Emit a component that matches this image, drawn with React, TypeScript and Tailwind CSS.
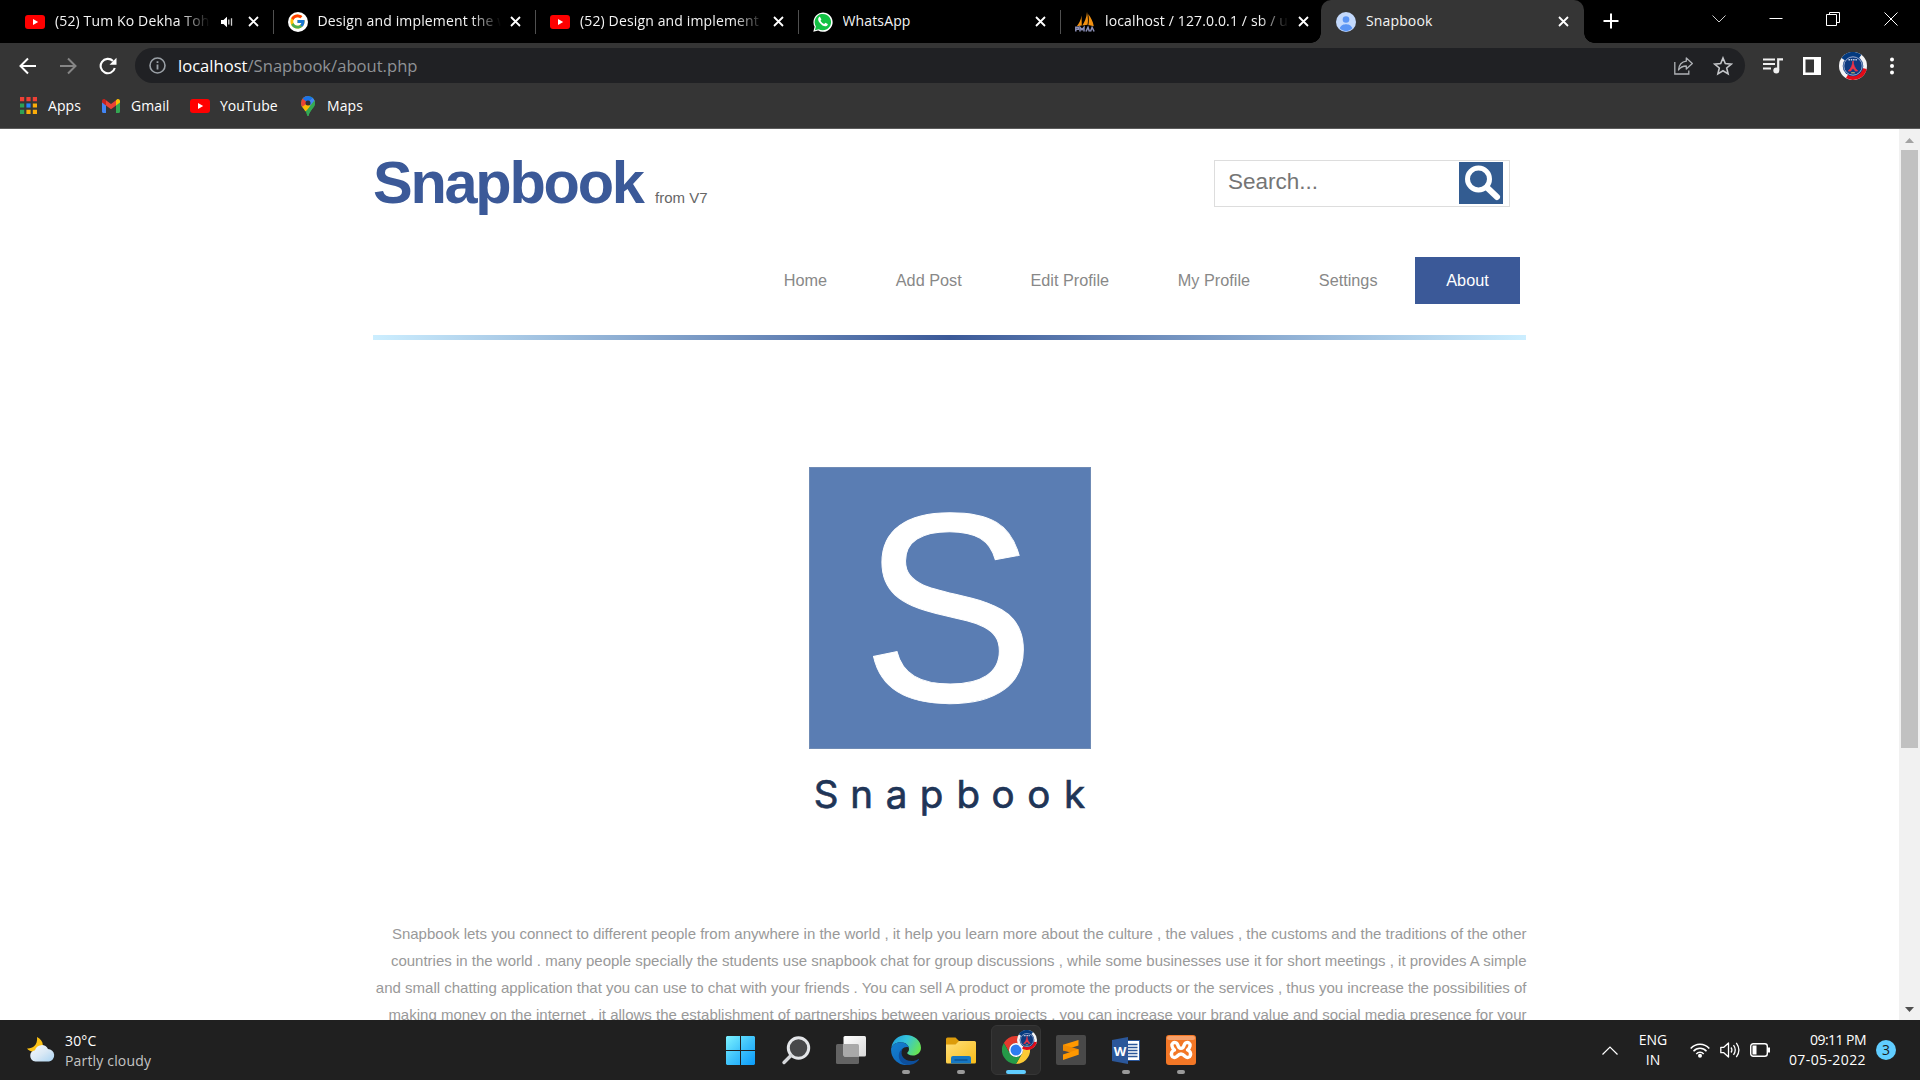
import type { ReactNode } from "react";
import { FcGoogle } from "react-icons/fc";

/* ---------- small icons ---------- */

function YouTubeIcon() {
  return (
    <svg viewBox="0 0 20 14" className="h-[14px] w-5 shrink-0">
      <rect width="20" height="14" rx="3" fill="#ff0000" />
      <path d="M8 4l5.2 3L8 10z" fill="#fff" />
    </svg>
  );
}

function GoogleIcon() {
  return (
    <span className="flex size-5 shrink-0 items-center justify-center rounded-full bg-white">
      <FcGoogle className="size-[17px]" />
    </span>
  );
}

function WhatsAppIcon() {
  return (
    <svg viewBox="0 0 20 20" className="size-5 shrink-0">
      <path d="M.3 19.8l1.3-5A9.6 9.6 0 1 1 5.2 18.500z" fill="#fff" />
      <path d="M1.900 18.200l1-3.700A8.200 8.200 0 1 1 5.700 17.200z" fill="#12c143" />
      <path
        d="M7.200 5.300c-.3-.6-.9-.6-1.300-.1-1.400 1.500-.8 3.600 1 5.800 2.100 2.500 4.700 4 6.700 3 1.100-.6 1.300-1.500 1.100-2.100l-2.300-1.200-1.200 1.300c-1.500-.5-2.900-1.700-3.700-3.300l.9-1.200z"
        fill="#fff"
      />
    </svg>
  );
}

function PhpMyAdminIcon() {
  return (
    <svg viewBox="0 0 20 20" className="size-5 shrink-0">
      <path d="M6.500 3.500C6 8 4 11.500 1.800 14.200l5-.8zM12 0C11.500 6 9.500 10 7.300 13.400l5.200-.6c.8-4 .5-8-.5-12.800zM13.200 2c.8 4 .8 7.500.2 10.900l5.400 1.300C18 9.500 16 5.500 13.200 2z" fill="#f29111" />
      <path d="M.8 19.500v-4.200h2.500v2H1M5 19.500v-4.200l2 2.500 2-2.500v4.200M11 19.500l2-4.200 1.400 4.200M15.500 19.500l1.600-4.200 2 4.200" stroke="#8c90b8" strokeWidth="1.500" fill="none" />
    </svg>
  );
}

function PersonIcon() {
  return (
    <svg viewBox="0 0 20 20" className="size-5 shrink-0">
      <circle cx="10" cy="10" r="10" fill="#c3d9fc" />
      <circle cx="10" cy="7.500" r="3.300" fill="#5a95f5" />
      <path d="M3.600 16.300C5 12.800 8 12.200 10 12.200s5 .6 6.400 4.100A9.900 9.900 0 0 1 10 19.500a9.900 9.900 0 0 1-6.400-3.200z" fill="#5a95f5" />
    </svg>
  );
}

function SpeakerIcon() {
  return (
    <svg viewBox="0 0 12 12" className="mr-[15px] ml-[11px] size-3 shrink-0">
      <path d="M0 4h2.500L6 .8v10.400L2.500 8H0z" fill="#fff" />
      <path d="M7.800 3.500v5M10.500 2.300v7.400" stroke="#d0d0d0" strokeWidth="1.300" />
    </svg>
  );
}

function TabCloseIcon() {
  return (
    <svg viewBox="0 0 11 11" className="size-[11px] shrink-0">
      <path d="M1 1l9 9M10 1l-9 9" stroke="#fff" strokeWidth="1.800" />
    </svg>
  );
}

function ClubBadge({ className }: { className: string }) {
  return (
    <svg viewBox="0 0 28 28" className={className}>
      <circle cx="14" cy="14" r="14" fill="#f4f4f6" />
      <path d="M2.500 6A14 14 0 0 1 22.500 2.800L14 14z" fill="#043a7e" />
      <path d="M27.800 17A14 14 0 0 1 7 26l7-12z" fill="#e30a17" />
      <circle cx="14" cy="14" r="10.300" fill="#0d3a80" />
      <circle cx="14" cy="14" r="9.200" fill="none" stroke="#a9b9d8" strokeWidth=".9" />
      <path d="M9.500 7.800h9" stroke="#c9d3e6" strokeWidth="1.600" strokeDasharray="1.500 .8" />
      <path d="M14 9c.4 4 1.600 7 4.600 10h-2.400c-.6-1.600-1.200-2.200-2.200-2.200s-1.600.6-2.200 2.200H9.400c3-3 4.200-6 4.600-10z" fill="#ee3347" stroke="#ee3347" strokeWidth=".8" />
      <path d="M12.200 20.800h3.600" stroke="#e8c65b" strokeWidth="1" />
    </svg>
  );
}

/* ---------- browser chrome ---------- */

type TabData = { icon: ReactNode; title: string; sound?: boolean; fade?: boolean; divider?: boolean };

const tabs: TabData[] = [
  { icon: <YouTubeIcon />, title: "(52) Tum Ko Dekha Toh", sound: true, fade: true, divider: true },
  { icon: <GoogleIcon />, title: "Design and implement the w", fade: true, divider: true },
  { icon: <YouTubeIcon />, title: "(52) Design and implement", fade: true, divider: true },
  { icon: <WhatsAppIcon />, title: "WhatsApp", divider: true },
  { icon: <PhpMyAdminIcon />, title: "localhost / 127.0.0.1 / sb / u", fade: true },
];

const fadeClass = "[mask-image:linear-gradient(to_right,#000_calc(100%-30px),transparent)]";

function Tab({ icon, title, sound, fade, divider }: TabData) {
  return (
    <div className="flex w-[262.5px] shrink-0 items-center pl-[14px]">
      {icon}
      <span className={`ml-[10px] flex-1 overflow-hidden pb-[2px] tracking-[0.14px] whitespace-nowrap ${fade ? fadeClass : ""}`}>{title}</span>
      {sound ? <SpeakerIcon /> : <span className="w-[9px]" />}
      <TabCloseIcon />
      <span className={`ml-[14px] h-6 w-px ${divider ? "bg-[#505050]" : ""}`} />
    </div>
  );
}

function TabStrip() {
  return (
    <div className="flex h-[43px] bg-black pl-[11px] text-[14px] leading-5 text-[#f4f4f4]">
      {tabs.map((t) => (
        <Tab key={t.title} {...t} />
      ))}
      <div className="relative -ml-[2.500px] flex w-[263px] shrink-0 items-center rounded-t-[10px] bg-[#353535] pl-[15px]">
        <span className="absolute bottom-0 -left-[10px] size-[10px] bg-[radial-gradient(circle_at_0_0,#000_9.5px,#353535_10px)]" />
        <span className="absolute -right-[10px] bottom-0 size-[10px] bg-[radial-gradient(circle_at_100%_0,#000_9.5px,#353535_10px)]" />
        <PersonIcon />
        <span className="ml-[10px] flex-1 pb-[2px] tracking-[0.14px]">Snapbook</span>
        <TabCloseIcon />
        <span className="w-[15px]" />
      </div>
      <svg viewBox="0 0 16 16" className="mt-[13px] ml-[19px] size-4">
        <path d="M8 .5v15M.5 8h15" stroke="#fff" strokeWidth="2" />
      </svg>
      <div className="mt-[12px] mr-[22px] ml-auto flex h-[14px]">
        <svg viewBox="0 0 14 14" className="mr-[43px] size-[14px]">
          <path d="M.5 3.500L7 10l6.500-6.500" stroke="#ccc" fill="none" />
        </svg>
        <svg viewBox="0 0 14 14" className="mr-[43px] size-[14px]">
          <path d="M.5 6.500h13" stroke="#fff" />
        </svg>
        <svg viewBox="0 0 14 14" className="mr-[44px] size-[14px]">
          <path d="M.5 2.500h10v11H.5zM3.500 2.500v-2h10v10h-3" stroke="#fff" fill="none" />
        </svg>
        <svg viewBox="0 0 14 14" className="size-[14px]">
          <path d="M.5.5l13 13M13.500.5l-13 13" stroke="#fff" />
        </svg>
      </div>
    </div>
  );
}

function Toolbar() {
  return (
    <div className="flex h-[45px] items-center pl-[19px]">
      <svg viewBox="0 0 18 18" className="size-[18px]">
        <path d="M17 9H2M9 1.500L1.500 9 9 16.500" stroke="#fff" strokeWidth="2" fill="none" />
      </svg>
      <svg viewBox="0 0 18 18" className="ml-[22px] size-[18px]">
        <path d="M1 9h15M9 1.500L16.500 9 9 16.500" stroke="#868686" strokeWidth="2" fill="none" />
      </svg>
      <svg viewBox="0 0 18 18" className="ml-[22px] size-[18px]">
        <path d="M15.800 11A7.200 7.200 0 1 1 14 4" stroke="#fff" strokeWidth="2.100" fill="none" />
        <path d="M17.500.8v7h-7z" fill="#fff" />
      </svg>
      <div className="ml-[18px] flex h-[35px] w-[1610px] items-center rounded-full bg-[#202124] pl-[14px]">
        <svg viewBox="0 0 17 17" className="size-[17px]">
          <circle cx="8.500" cy="8.500" r="7.500" stroke="#9aa0a6" strokeWidth="1.600" fill="none" />
          <path d="M8.500 7.500v5M8.500 4.300v1.800" stroke="#9aa0a6" strokeWidth="1.800" />
        </svg>
        <span className="ml-[12px] text-[16.600px] leading-6 text-[#8f9296]">
          <span className="text-white">localhost</span>/Snapbook/about.php
        </span>
        <svg viewBox="0 0 19 18" className="mr-[20px] ml-auto h-[18px] w-[19px]">
          <path d="M.8 5v12h14v-3.500" stroke="#b0b3b7" strokeWidth="1.300" fill="none" />
          <path d="M12.300 1l6 5.500-6 5.500V9C9 9 6.500 10 4.500 13c.5-5 3.500-8.300 7.800-8.800z" stroke="#b0b3b7" strokeWidth="1.300" strokeLinejoin="round" fill="none" />
        </svg>
        <svg viewBox="0 0 20 20" className="mr-[12px] size-[20px]">
          <path d="M10 2l2.300 5.600 6 .5-4.600 3.900 1.400 5.900-5.100-3.100-5.100 3.100L6.300 12 1.700 8.100l6-.5z" stroke="#c4c6c9" strokeWidth="1.600" fill="none" />
        </svg>
      </div>
      <svg viewBox="0 0 20 16" className="ml-[18px] h-4 w-5">
        <path d="M0 1.500h12M0 6h12M0 10.500h8" stroke="#f0f0f0" strokeWidth="2" />
        <path d="M15.200 12V1.300H20" stroke="#f0f0f0" strokeWidth="2.200" fill="none" />
        <circle cx="13.300" cy="12.600" r="3" fill="#f0f0f0" />
      </svg>
      <svg viewBox="0 0 18 18" className="ml-[20px] size-[18px]">
        <path d="M0 0h18v18H0zM2.500 2.500v13h8.500v-13z" fill="#fff" fillRule="evenodd" />
      </svg>
      <ClubBadge className="ml-[18px] size-7" />
      <svg viewBox="0 0 4 18" className="ml-[23px] h-[18px] w-1">
        <circle cx="2" cy="2.500" r="2" fill="#fff" />
        <circle cx="2" cy="9" r="2" fill="#fff" />
        <circle cx="2" cy="15.500" r="2" fill="#fff" />
      </svg>
    </div>
  );
}

function BookmarksBar() {
  return (
    <div className="flex h-[40px] items-center pb-[5px] pl-5 text-[14px] leading-5 tracking-[0.08px] text-white">
      <svg viewBox="0 0 17 17" className="size-[17px]">
        <path d="M0 0h4.200v4.200H0zM6.400 0h4.200v4.200H6.400zM12.800 0H17v4.200h-4.200z" fill="#ee4035" />
        <path d="M0 6.400h4.200v4.200H0zM0 12.800h4.200V17H0z" fill="#2ea155" />
        <path d="M6.400 6.400h4.200v4.200H6.400z" fill="#2684fc" />
        <path d="M12.800 6.400H17v4.200h-4.200zM6.400 12.800h4.200V17H6.400zM12.800 12.800H17V17h-4.200z" fill="#fbac09" />
      </svg>
      <span className="ml-[11px] w-[54px]">Apps</span>
      <svg viewBox="0 0 18 14" className="h-[14px] w-[18px]">
        <path d="M0 2v10.800c0 .7.500 1.200 1.200 1.200H4V6z" fill="#4285f4" />
        <path d="M18 2v10.800c0 .7-.5 1.200-1.200 1.200H14V6z" fill="#34a853" />
        <path d="M14 1.200V6.500l4-3V2c0-1.800-2-2.500-3.200-1.500z" fill="#fbbc04" />
        <path d="M0 2v1.500l4 3V1.200L3.200.5C2-.5 0 .2 0 2z" fill="#c5221f" />
        <path d="M4 1.200L9 5l5-3.800v5.300l-5 3.800-5-3.800z" fill="#ea4335" />
      </svg>
      <span className="ml-[11px] w-[59px]">Gmail</span>
      <YouTubeIcon />
      <span className="ml-[10px] w-[81px] tracking-normal">YouTube</span>
      <svg viewBox="0 0 14 20" className="h-5 w-[14px]">
        <defs>
          <clipPath id="pin">
            <path d="M7 0a7 7 0 0 0-7 7c0 5 5 6.500 6.200 12.300.3.900 1.300.9 1.600 0C9 13.500 14 12 14 7a7 7 0 0 0-7-7z" />
          </clipPath>
        </defs>
        <g clipPath="url(#pin)">
          <path d="M0 0h14v20H0z" fill="#34a853" />
          <path d="M0 16V10l9-9 5 4-9 10z" fill="#fbbc04" />
          <path d="M0 11.500L7 7V0H0z" fill="#ea4335" />
          <path d="M1.500 2.500L7 7l6-5.500L8 0H3z" fill="#1a73e8" />
          <path d="M7 7l5-5.500L14 5 9 10z" fill="#4285f4" />
          <path d="M14 4v16H4l5-10 4-5z" fill="#34a853" />
        </g>
        <circle cx="7" cy="7" r="2.500" fill="#303134" />
      </svg>
      <span className="ml-[12px]">Maps</span>
    </div>
  );
}

/* ---------- web page ---------- */

const navItems = ["Home", "Add Post", "Edit Profile", "My Profile", "Settings", "About"];

const paragraphLines = [
  "Snapbook lets you connect to different people from anywhere in the world , it help you learn more about the culture , the values , the customs and the traditions of the other",
  "countries in the world . many people specially the students use snapbook chat for group discussions , while some businesses use it for short meetings , it provides A simple",
  "and small chatting application that you can use to chat with your friends . You can sell A product or promote the products or the services , thus you increase the possibilities of",
  "making money on the internet , it allows the establishment of partnerships between various projects , you can increase your brand value and social media presence for your",
];

function SnapbookLogo() {
  return (
    <svg viewBox="0 0 282 350" className="mt-[127px] ml-[436px] h-[350px] w-[282px] overflow-visible">
      <rect x=".5" y=".5" width="281" height="281" fill="#5a7db3" stroke="#6f8bb5" />
      <text
        transform="translate(139.500 234) scale(.975 1.01)"
        textAnchor="middle"
        fontSize="267"
        fill="#fff"
        stroke="#fff"
        strokeWidth="1"
        className="font-['Liberation_Sans',Arial,sans-serif]"
      >
        S
      </text>
      <text
        x="4.800 41.300 76.800 110.800 147.500 182.500 218.200 255"
        y="341"
        fontSize="38.500"
        fill="#1f3557"
        stroke="#1f3557"
        strokeWidth=".7"
        className="font-['Inter',sans-serif] font-normal"
      >
        Snapbook
      </text>
    </svg>
  );
}

function WebPage() {
  return (
    <main className="flex h-[891px] overflow-hidden bg-white font-['Liberation_Sans',Arial,sans-serif]">
      <div className="flex-1">
        <div className="ml-[373px] w-[1153px]">
          <div className="flex h-[128px] items-start justify-between pr-4">
            <div className="flex items-baseline pt-[24px]">
              <h1 className="text-[59.500px] leading-[60px] font-bold tracking-[-2.250px] text-[#3b5998]">Snapbook</h1>
              <span className="ml-[12.500px] text-[15px] leading-5 text-[#666]">from V7</span>
            </div>
            <div className="mt-[31px] flex h-[47px] w-[296px] items-start justify-between border border-[#ddd] pt-px pr-[6px] pl-[13px]">
              <span className="pt-[6px] text-[22.500px] leading-7 text-[#757575]">Search...</span>
              <svg viewBox="0 0 44 42" className="h-[42px] w-11 bg-[#335c91]">
                <circle cx="19.500" cy="17" r="11" stroke="#fff" strokeWidth="5" fill="none" />
                <path d="M28 25.500L38 35" stroke="#fff" strokeWidth="6" strokeLinecap="round" />
              </svg>
            </div>
          </div>
          <nav className="flex justify-end gap-[6.250px] pr-[6px] text-[16.250px] leading-[47px]">
            {navItems.map((item) => (
              <a
                key={item}
                className={`px-[31.250px] whitespace-nowrap ${item === "About" ? "bg-[#3b5998] text-white" : "text-[#888]"}`}
              >
                {item}
              </a>
            ))}
          </nav>
          <div className="mt-[31px] h-[5px] bg-[linear-gradient(to_right,#cceeff,#3b5998,#cceeff)]" />
          <SnapbookLogo />
          <div className="mt-[103px] -mr-[0.500px] text-right text-[15px] leading-[27px] whitespace-nowrap text-[#999]">
            {paragraphLines.map((line) => (
              <p key={line}>{line}</p>
            ))}
          </div>
        </div>
      </div>
      <div className="flex w-[21px] flex-col items-center bg-[#f1f1f1]">
        <svg viewBox="0 0 21 21" className="size-[21px] shrink-0">
          <path d="M6 14h9l-4.500-5z" fill="#a3a3a3" />
        </svg>
        <div className="h-[598px] w-[17px] shrink-0 bg-[#c1c1c1]" />
        <svg viewBox="0 0 21 21" className="mt-auto size-[21px] shrink-0">
          <path d="M6 8h9l-4.500 5z" fill="#505050" />
        </svg>
      </div>
    </main>
  );
}

/* ---------- Windows taskbar ---------- */

function WeatherIcon() {
  return (
    <svg viewBox="0 0 28 25" className="h-[25px] w-7">
      <defs>
        <linearGradient id="cloud" x1="0" y1="0" x2="1" y2="1">
          <stop offset="0" stopColor="#f4f8fc" />
          <stop offset=".5" stopColor="#dbe9f5" />
          <stop offset="1" stopColor="#a9d3f2" />
        </linearGradient>
      </defs>
      <path d="M10 0c3.500 2 5.800 4.500 5.800 8S12 15 8 15C4 15 1 13 0 11.500c5 .5 11-3 10-11.500z" fill="#fbc115" />
      <path d="M8.500 24.500a5.700 5.700 0 0 1-.5-11.300 7 7 0 0 1 13-1.200 6.300 6.300 0 0 1 1 12.500z" fill="url(#cloud)" />
    </svg>
  );
}

function WindowsIcon() {
  return (
    <svg viewBox="0 0 29 29" className="size-[29px]">
      <defs>
        <linearGradient id="win" x1="0" y1="0" x2="1" y2="1">
          <stop offset="0" stopColor="#7df3ff" />
          <stop offset=".5" stopColor="#3fc3fb" />
          <stop offset="1" stopColor="#0a9bfa" />
        </linearGradient>
      </defs>
      <path d="M1 0h13v14H0V1zM15 0h13l1 1v13H15zM0 15h14v14H1l-1-1zM15 15h14v13l-1 1H15z" fill="url(#win)" />
    </svg>
  );
}

function SearchTaskIcon() {
  return (
    <svg viewBox="0 0 28 29" className="h-[29px] w-7 overflow-visible">
      <circle cx="16.500" cy="12" r="10.200" fill="#47484a" stroke="#e3e5e8" strokeWidth="3" />
      <path d="M9 19.500l-7 7" stroke="#d5d7da" strokeWidth="3.400" strokeLinecap="round" />
    </svg>
  );
}

function TaskViewIcon() {
  return (
    <svg viewBox="0 0 30 28" className="h-7 w-[30px]">
      <defs>
        <linearGradient id="tv" x1="0" y1="0" x2="1" y2="1">
          <stop offset="0" stopColor="#fff" />
          <stop offset="1" stopColor="#d8d8d8" />
        </linearGradient>
      </defs>
      <rect y="8" width="23" height="20" rx="1.500" fill="#636363" />
      <rect x="7.500" width="22.500" height="20.500" rx="1.500" fill="url(#tv)" />
      <path d="M7.500 8H21.500q1.500 0 1.500 1.500v11H9q-1.500 0-1.500-1.500z" fill="#a9a9a9" />
    </svg>
  );
}

function EdgeIcon() {
  return (
    <svg viewBox="0 0 30 30" className="size-[30px]">
      <defs>
        <linearGradient id="edgeTop" x1="0" y1=".2" x2="1" y2=".6">
          <stop offset="0" stopColor="#1f9fdc" />
          <stop offset=".45" stopColor="#35c4dc" />
          <stop offset="1" stopColor="#68e552" />
        </linearGradient>
        <linearGradient id="edgeBody" x1="0" y1="0" x2=".6" y2="1">
          <stop offset="0" stopColor="#1481cf" />
          <stop offset="1" stopColor="#0f68bd" />
        </linearGradient>
      </defs>
      <path d="M.4 12.500C1.500 5 7.500 0 15 0c8.500 0 15 5.800 15 12.700 0 4.800-3.800 7.800-8.200 7.800-3.600 0-5.600-1.300-5.600-2.400 0-.9 1.800-1.300 1.800-4C18 10 14.500 7.200 9.700 7.200 5 7.200 2 9.500.4 12.500z" fill="url(#edgeTop)" />
      <path d="M.2 13C2 9 5.500 7.200 9.700 7.200c4.300 0 7.300 2.300 8.100 5.200C13 11 9.500 14.500 9.500 18.500c0 5 3.800 9.500 10 10.800A15 15 0 0 1 .2 13z" fill="url(#edgeBody)" />
      <path d="M11.500 14c-3 6 1.500 12 9 12 2.800 0 5-.8 6.600-1.800.7-.4 1 .2.7.7C25 28.500 20.500 30 16.500 30 10.500 29.500 7.500 24.500 7.800 20c.2-2.800 1.700-4.900 3.700-6z" fill="#0d4f9c" />
    </svg>
  );
}

function FolderIcon() {
  return (
    <svg viewBox="0 0 30 27" className="h-[27px] w-[30px]">
      <defs>
        <linearGradient id="fold" x1="0" y1="0" x2="1" y2="1">
          <stop offset="0" stopColor="#ffdf7b" />
          <stop offset="1" stopColor="#f9bd18" />
        </linearGradient>
      </defs>
      <path d="M0 2q0-1.500 1.500-1.500h8L13 4v6H0z" fill="#dc9b0b" />
      <path d="M0 7.500h9.500L13 4h15.500Q30 4 30 5.500V25q0 1.500-1.500 1.500h-27Q0 26.500 0 25z" fill="url(#fold)" />
      <path d="M5 26.500V21q0-2 2-2h16q2 0 2 2v5.500z" fill="#1678c4" />
      <path d="M8.500 23h13" stroke="#0c4f8e" strokeWidth="1.300" />
    </svg>
  );
}

function ChromeIcon() {
  return (
    <span className="relative">
      <svg viewBox="0 0 24 24" className="size-7">
        <path d="M12 6H22.400A12 12 0 0 0 1.600 6L6.800 15A6 6 0 0 1 12 6z" fill="#e33b2e" />
        <path d="M22.400 6A12 12 0 0 1 12 24L17.200 15A6 6 0 0 0 12 6z" fill="#fcc934" />
        <path d="M12 24A12 12 0 0 1 1.600 6L6.800 15A6 6 0 0 0 17.200 15z" fill="#259b48" />
        <circle cx="12" cy="12" r="6" fill="#fff" />
        <circle cx="12" cy="12" r="4.700" fill="#2d7cf0" />
      </svg>
      <ClubBadge className="absolute -top-[6px] left-[15px] size-5" />
    </span>
  );
}

function SublimeIcon() {
  return (
    <svg viewBox="0 0 30 30" className="size-[30px]">
      <rect width="30" height="30" rx="2" fill="#494949" />
      <path d="M7 9.800L22.500 5v5.600L7 15.500z" fill="#ff9800" />
      <path d="M7 9.800v5.700l15.500 4.300V14.300z" fill="#f08a00" />
      <path d="M22.500 14.300v5.500L7 25v-5.500z" fill="#ff9800" />
    </svg>
  );
}

function WordIcon() {
  return (
    <svg viewBox="0 0 28 27" className="h-[27px] w-7">
      <rect x="14" y="3.500" width="13.500" height="20" fill="#fff" stroke="#2b579a" />
      <path d="M16 7.500h9.500M16 10.500h9.500M16 13.500h9.500M16 16.500h9.500M16 19.500h9.500" stroke="#2b579a" strokeWidth="1.400" />
      <path d="M0 3l16-3v27L0 24z" fill="#2b579a" />
      <text x="8" y="18.500" textAnchor="middle" fontSize="13" fill="#fff" className="font-['Open_Sans',sans-serif] font-bold">
        W
      </text>
    </svg>
  );
}

function XamppIcon() {
  return (
    <svg viewBox="0 0 30 30" className="size-[30px]">
      <rect width="30" height="30" rx="3" fill="#f37726" />
      <rect x="1" y="1" width="28" height="4" rx="2" fill="#f6a06a" />
      <path
        d="M10.500 8C7.500 6.500 5.500 8.500 6 11c.5 2.500 2 3.500 2.500 4-2.500 1-3.500 3-2.800 5.500.7 2.300 3.300 2.500 5 1 1.500-1.500 2.500-2.500 4.300-2.500s2.800 1 4.300 2.500c1.700 1.500 4.300 1.300 5-1 .7-2.500-.3-4.500-2.800-5.500.5-.5 2-1.500 2.500-4 .5-2.500-1.500-4.500-4.500-3M10.500 8c1.500.8 1 3 2.500 4.500 1 1 3 1 4 0 1.500-1.500 1-3.700 2.500-4.500"
        fill="none"
        stroke="#fff"
        strokeWidth="3.400"
        strokeLinejoin="round"
      />
    </svg>
  );
}

const apps: { icon: ReactNode; state?: "running" | "active" }[] = [
  { icon: <WindowsIcon /> },
  { icon: <SearchTaskIcon /> },
  { icon: <TaskViewIcon /> },
  { icon: <EdgeIcon />, state: "running" },
  { icon: <FolderIcon />, state: "running" },
  { icon: <ChromeIcon />, state: "active" },
  { icon: <SublimeIcon /> },
  { icon: <WordIcon />, state: "running" },
  { icon: <XamppIcon />, state: "running" },
];

function Taskbar() {
  return (
    <footer className="flex h-[60px] bg-[#202020] text-[14px] leading-5 text-white">
      <div className="flex w-[713px] items-center pl-[27px]">
        <div className="pb-[2px]">
          <WeatherIcon />
        </div>
        <div className="ml-[10px] pt-px tracking-[0.17px]">
          <div>30°C</div>
          <div className="text-[#c4c4c4]">Partly cloudy</div>
        </div>
      </div>
      <div className="flex">
        {apps.map((app, i) => (
          <div key={i} className="flex w-[55px] flex-col items-center pt-[5px]">
            <div
              className={`relative flex h-[50px] w-[50px] items-center justify-center rounded-md ${app.state === "active" ? "border border-[#363636] bg-[#2c2c2c]" : ""}`}
            >
              {app.icon}
              {app.state === "running" && <span className="absolute bottom-[1px] h-1 w-2 rounded-full bg-[#9a9a9a]" />}
              {app.state === "active" && <span className="absolute bottom-0 h-1 w-5 rounded-full bg-[#60cdff]" />}
            </div>
          </div>
        ))}
      </div>
      <div className="ml-auto flex items-center pr-6">
        <svg viewBox="0 0 16 9" className="h-[9px] w-4">
          <path d="M.5 8.500L8 1l7.500 7.500" stroke="#fff" strokeWidth="1.200" fill="none" />
        </svg>
        <div className="ml-[20px] w-[30px] text-center">
          <div>ENG</div>
          <div>IN</div>
        </div>
        <svg viewBox="0 0 20 15" className="ml-[22px] h-[15px] w-5">
          <path d="M.7 5.500C5.700-.3 14.300-.3 19.300 5.500M3.500 8.300c3.500-4 9.500-4 13 0M6.300 11c2-2.300 5.400-2.300 7.400 0" stroke="#fff" strokeWidth="1.500" fill="none" />
          <circle cx="10" cy="12.800" r="2" fill="#fff" />
        </svg>
        <svg viewBox="0 0 20 18" className="ml-[10px] h-[18px] w-5">
          <path d="M.8 6.300h3L8.500 2v14l-4.700-4.300h-3z" stroke="#fff" strokeWidth="1.300" fill="none" strokeLinejoin="round" />
          <path d="M11 6.500q1.800 2.500 0 5M13.500 4.200q3.500 4.800 0 9.600M16.300 1.800q5.200 7.200 0 14.400" stroke="#fff" strokeWidth="1.300" fill="none" />
        </svg>
        <svg viewBox="0 0 20 14" className="ml-[10px] h-[14px] w-5">
          <rect x=".7" y=".7" width="16.600" height="12.600" rx="2.500" stroke="#fff" strokeWidth="1.400" fill="none" />
          <path d="M2.500 2.500h4v9h-4zM18 4.500h2v5h-2z" fill="#fff" />
        </svg>
        <div className="ml-[16px] w-[80px] pb-px text-right">
          <div className="tracking-[-0.550px]">09:11 PM</div>
          <div className="tracking-[0.400px]">07-05-2022</div>
        </div>
        <span className="ml-[10px] flex size-5 items-center justify-center rounded-full bg-[#60cdff] text-[14px] text-[#1a1a1a]">3</span>
      </div>
    </footer>
  );
}

export default function App() {
  return (
    <div className="h-[1080px] w-[1920px] overflow-hidden font-['Open_Sans','Noto_Sans',sans-serif]">
      <header className="border-b border-[#5c5c5c] bg-[#353535]">
        <TabStrip />
        <Toolbar />
        <BookmarksBar />
      </header>
      <WebPage />
      <Taskbar />
    </div>
  );
}
